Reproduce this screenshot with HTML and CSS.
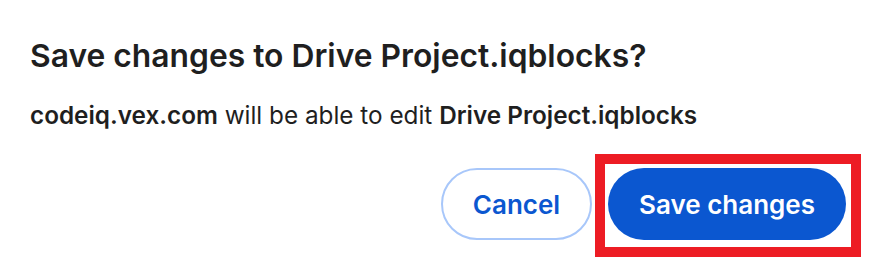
FILE: index.html
```html
<!DOCTYPE html>
<html>
<head>
<meta charset="utf-8">
<link rel="stylesheet" href="styles.css">
</head>
<body>
<div class="dialog">
  <h1 class="title">Save changes to Drive Project.iqblocks?</h1>
  <p class="message"><b>codeiq.vex.com</b> will be able to edit <b>Drive Project.iqblocks</b></p>
  <div class="actions">
    <button class="btn btn-cancel">Cancel</button>
    <button class="btn btn-save">Save changes<span class="highlight"></span></button>
  </div>
</div>
</body>
</html>
```
FILE: styles.css
```css
html, body {
  margin: 0;
  background: #ffffff;
}
.dialog {
  width: 880px;
  height: 276px;
  box-sizing: border-box;
  padding: 37px 34px 0 30px;
  font-family: Inter, "Noto Sans", sans-serif;
  color: #1f1f1f;
}
.title {
  margin: 0;
  font-size: 31.8px;
  line-height: 38px;
  font-weight: 600;
}
.message {
  margin: 25px 0 0;
  font-size: 24.3px;
  line-height: 30px;
  font-weight: 400;
}
.message b {
  font-weight: 600;
}
.actions {
  display: flex;
  justify-content: flex-end;
  gap: 16px;
  margin-top: 38px;
}
.btn {
  position: relative;
  height: 72px;
  border-radius: 36px;
  font-family: Inter, "Noto Sans", sans-serif;
  font-size: 26px;
  font-weight: 600;
  box-sizing: border-box;
  cursor: pointer;
}
.btn-cancel {
  width: 151px;
  background: #ffffff;
  color: #0b57d0;
  border: 2px solid #a8c7fa;
}
.btn-save {
  width: 238px;
  background: #0b57d0;
  color: #ffffff;
  border: none;
}
.highlight {
  position: absolute;
  left: -13px;
  top: -14px;
  right: -15px;
  bottom: -17px;
  border: 10px solid #ed1c24;
  pointer-events: none;
}
```
